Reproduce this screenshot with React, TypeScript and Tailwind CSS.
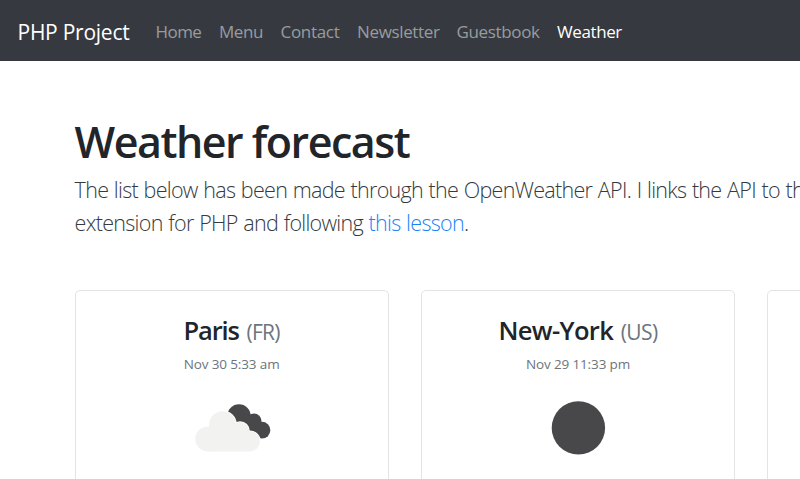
import type { ReactNode } from "react";

const links = [
  { label: "Home", style: "w-[46px] mr-[17.5px] tracking-[-0.55px]" },
  { label: "Menu", style: "w-[44px] mr-[17.5px] tracking-[-0.45px]" },
  { label: "Contact", style: "w-[59px] mr-[17.5px] tracking-[-0.3px]" },
  { label: "Newsletter", style: "w-[82px] mr-[17.5px] tracking-[-0.35px]" },
  { label: "Guestbook", style: "w-[83px] mr-[17.5px] tracking-[-0.35px]" },
  { label: "Weather", style: "w-[65px] tracking-[-0.4px] text-white", active: true },
];

function Clouds() {
  const cloud = (
    <>
      <circle cx="207" cy="439" r="12.5" />
      <circle cx="221.8" cy="424.7" r="13.5" />
      <circle cx="239.3" cy="431" r="9" />
      <circle cx="249.3" cy="441.3" r="10" />
      <path d="M207 427h15l18 0 10 9v15.5h-43z" />
    </>
  );
  return (
    <svg className="block h-[60px] w-[94px]" viewBox="184.3 398 94 60">
      <g fill="#48484a">
        <circle cx="238.3" cy="416" r="11.7" />
        <circle cx="253.3" cy="421" r="7.5" />
        <circle cx="261.2" cy="430.2" r="8.4" />
        <path d="M238 416l15 0 8 22-12-2z" />
      </g>
      <g fill="#fff" stroke="#fff" strokeWidth="1.6">{cloud}</g>
      <g fill="#f2f2f0">{cloud}</g>
    </svg>
  );
}

function Moon() {
  return (
    <svg className="block h-[60px] w-[60px]" viewBox="0 0 60 60">
      <circle cx="30.4" cy="29.9" r="26.7" fill="#48484a" />
    </svg>
  );
}

function Card({ children }: { children?: ReactNode }) {
  return (
    <article className="flex h-[260px] w-[314px] shrink-0 flex-col items-center rounded-[5px] border border-[#e4e4e5] bg-white pt-[22px] whitespace-nowrap">
      {children}
    </article>
  );
}

export default function App() {
  return (
    <div className="h-[479px] w-[800px] overflow-hidden bg-white font-['Open_Sans','Noto_Sans',sans-serif] text-[#212529]">
      <nav className="flex h-[61px] items-center bg-[#363a40] pt-[2px] pl-[17.5px] whitespace-nowrap">
        <a className="mr-[26px] w-[112px] text-[21px] leading-[30px] tracking-[-0.25px] text-white">PHP Project</a>
        {links.map((link) => (
          <a key={link.label} className={`text-[17px] leading-[26px] ${link.active ? "text-white" : "text-[#999c9f]"} ${link.style}`}>
            {link.label}
          </a>
        ))}
      </nav>
      <main className="pt-[54px] pl-[74.6px]">
        <h1 className="h-[53px] text-[43px] leading-[53px] font-semibold tracking-[-1.5px] whitespace-nowrap">Weather forecast</h1>
        <p className="mt-[5px] h-[66px] text-[21.5px] leading-[33px] font-light tracking-[-0.7px] text-[#343a40] [word-spacing:0.7px] whitespace-nowrap">
          <span className="block">The list below has been made through the OpenWeather API. I links the API to th</span>
          <span className="block">
            extension for PHP and following <a className="text-[#1a82f7]">this lesson</a>.
          </span>
        </p>
        <section className="mt-[51px] flex gap-[32.4px]">
          <Card>
            <h2 className="flex h-[34px] items-baseline gap-[7.5px] leading-[34px]">
              <span className="text-[25.5px] font-semibold tracking-[-1.1px]">Paris</span>
              <span className="text-[21px] tracking-[-0.7px] text-[#6c757d]">(FR)</span>
            </h2>
            <p className="mt-[7px] h-[20px] text-[13.5px] leading-[20px] tracking-[-0.13px] text-[#6c757d]">Nov 30 5:33 am</p>
            <div className="mt-[24px]">
              <Clouds />
            </div>
          </Card>
          <Card>
            <h2 className="flex h-[34px] items-baseline gap-[7.5px] leading-[34px]">
              <span className="text-[25.5px] font-semibold tracking-[-0.65px]">New-York</span>
              <span className="text-[21px] tracking-[-0.6px] text-[#6c757d]">(US)</span>
            </h2>
            <p className="mt-[7px] h-[20px] text-[13.5px] leading-[20px] tracking-[-0.13px] text-[#6c757d]">Nov 29 11:33 pm</p>
            <div className="mt-[24px]">
              <Moon />
            </div>
          </Card>
          <Card />
        </section>
      </main>
    </div>
  );
}
